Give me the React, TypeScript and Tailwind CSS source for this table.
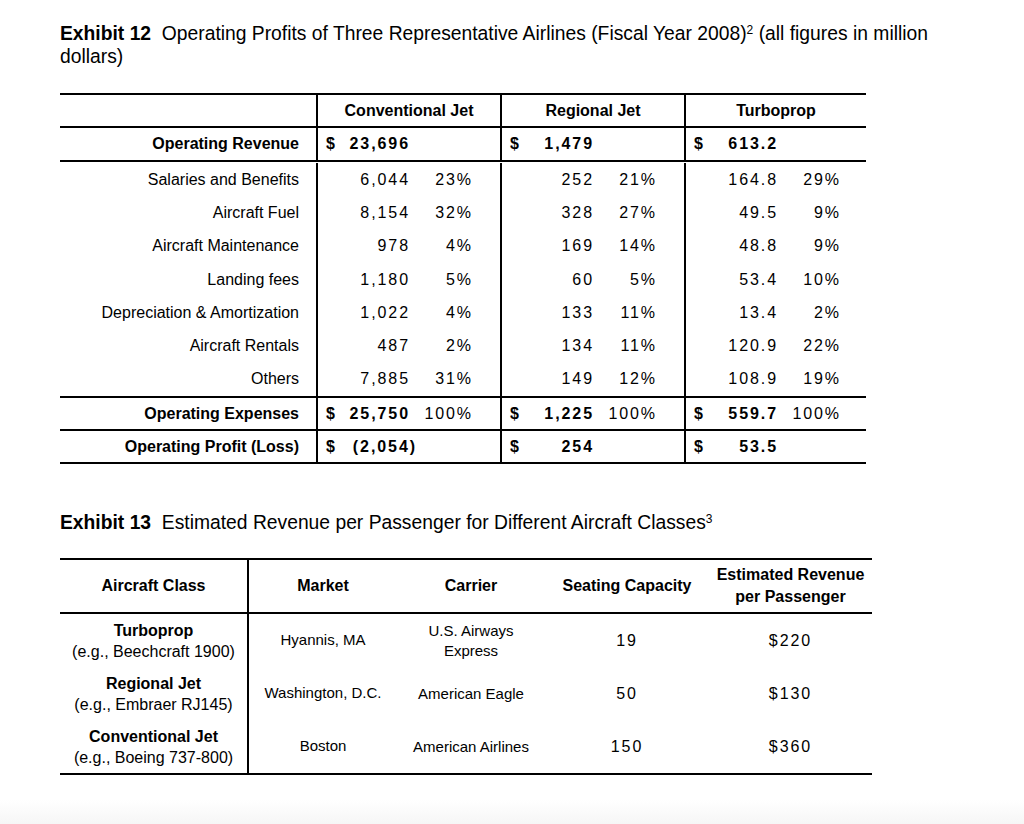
import React from 'react'

type Pair = [string, string]

interface ICostRow {
    label: string
    values: Pair[]
}

const costRows: ICostRow[] = [
    { label: 'Salaries and Benefits', values: [['6,044', '23%'], ['252', '21%'], ['164.8', '29%']] },
    { label: 'Aircraft Fuel', values: [['8,154', '32%'], ['328', '27%'], ['49.5', '9%']] },
    { label: 'Aircraft Maintenance', values: [['978', '4%'], ['169', '14%'], ['48.8', '9%']] },
    { label: 'Landing fees', values: [['1,180', '5%'], ['60', '5%'], ['53.4', '10%']] },
    { label: 'Depreciation & Amortization', values: [['1,022', '4%'], ['133', '11%'], ['13.4', '2%']] },
    { label: 'Aircraft Rentals', values: [['487', '2%'], ['134', '11%'], ['120.9', '22%']] },
    { label: 'Others', values: [['7,885', '31%'], ['149', '12%'], ['108.9', '19%']] },
]

const colWidths = ['w-[184px]', 'w-[184px]', 'w-[182px]']

const Money: React.FC<{ dollar?: boolean; value: string; pct?: string; bold?: boolean; neg?: boolean }> = ({
    dollar,
    value,
    pct,
    bold,
    neg,
}) => {
    return (
        <div className="grid h-full grid-cols-[20px_64px_63px] items-center pl-[8px] tracking-[0.12em]">
            <span className="font-bold tracking-normal">{dollar ? '$' : ''}</span>
            <span className={`text-right ${bold ? 'font-bold' : ''} ${neg ? 'mr-[-7px]' : ''}`}>{value}</span>
            <span className="text-right">{pct}</span>
        </div>
    )
}

const SummaryRow: React.FC<{ label: string; values: string[]; pcts?: string[]; h: string }> = ({
    label,
    values,
    pcts,
    h,
}) => {
    return (
        <div className={`flex border-b-2 border-black ${h}`}>
            <div className="flex w-[256px] items-center justify-end pr-[17px] font-bold">{label}</div>
            {values.map((v, i) => (
                <div key={i} className={`${colWidths[i]} border-l-2 border-black`}>
                    <Money dollar bold value={v} pct={pcts ? pcts[i] : ''} neg={v.startsWith('(')} />
                </div>
            ))}
        </div>
    )
}

interface IAircraft {
    name: string
    example: string
    market: string
    carrier: React.ReactNode
    seats: string
    revenue: string
}

const aircraft: IAircraft[] = [
    {
        name: 'Turboprop',
        example: '(e.g., Beechcraft 1900)',
        market: 'Hyannis, MA',
        carrier: (
            <>
                U.S. Airways
                <br />
                Express
            </>
        ),
        seats: '19',
        revenue: '$220',
    },
    {
        name: 'Regional Jet',
        example: '(e.g., Embraer RJ145)',
        market: 'Washington, D.C.',
        carrier: 'American Eagle',
        seats: '50',
        revenue: '$130',
    },
    {
        name: 'Conventional Jet',
        example: '(e.g., Boeing 737-800)',
        market: 'Boston',
        carrier: 'American Airlines',
        seats: '150',
        revenue: '$360',
    },
]

const App: React.FC = () => {
    return (
        <div className="flex min-h-[824px] flex-col bg-white font-['Liberation_Sans',Arial,sans-serif] text-[16px] text-black">
            <div className="pl-[60px] pt-[22px]">
                <h1 className="text-[19.3px] leading-[23px]">
                    <span className="font-bold">Exhibit 12</span>
                    &nbsp; Operating Profits of Three Representative Airlines (Fiscal Year 2008)
                    <sup className="text-[12px]">2</sup> (all figures in million
                    <br />
                    dollars)
                </h1>

                {/* Exhibit 12 table */}
                <div className="mt-[25px] w-[806px] border-t-2 border-black">
                    <div className="flex h-[33px] border-b-2 border-black font-bold">
                        <div className="w-[256px]"></div>
                        <div className="flex w-[184px] items-center justify-center border-l-2 border-black">
                            Conventional Jet
                        </div>
                        <div className="flex w-[184px] items-center justify-center border-l-2 border-black">
                            Regional Jet
                        </div>
                        <div className="flex w-[182px] items-center justify-center border-l-2 border-black">
                            Turboprop
                        </div>
                    </div>
                    <SummaryRow h="h-[34px]" label="Operating Revenue" values={['23,696', '1,479', '613.2']} />
                    <div className="flex flex-col border-b-2 border-black pt-[1px]">
                        {costRows.map((row) => (
                            <div key={row.label} className="flex h-[33.3px]">
                                <div className="flex w-[256px] items-center justify-end pr-[17px]">{row.label}</div>
                                {row.values.map((pair, i) => (
                                    <div key={i} className={`${colWidths[i]} border-l-2 border-black`}>
                                        <Money value={pair[0]} pct={pair[1]} />
                                    </div>
                                ))}
                            </div>
                        ))}
                    </div>
                    <SummaryRow
                        h="h-[33px]"
                        label="Operating Expenses"
                        values={['25,750', '1,225', '559.7']}
                        pcts={['100%', '100%', '100%']}
                    />
                    <SummaryRow h="h-[33px]" label="Operating Profit (Loss)" values={['(2,054)', '254', '53.5']} />
                </div>

                <h2 className="mt-[47px] text-[19.3px] leading-[23px]">
                    <span className="font-bold">Exhibit 13</span>
                    &nbsp; Estimated Revenue per Passenger for Different Aircraft Classes
                    <sup className="text-[12px]">3</sup>
                </h2>

                {/* Exhibit 13 table */}
                <div className="mt-[24px] w-[812px] border-y-2 border-black">
                    <div className="flex h-[54px] border-b-2 border-black text-center font-bold">
                        <div className="flex w-[187px] items-center justify-center">Aircraft Class</div>
                        <div className="flex w-[150px] items-center justify-center border-l-2 border-black">
                            Market
                        </div>
                        <div className="flex w-[148px] items-center justify-center">Carrier</div>
                        <div className="flex w-[164px] items-center justify-center">Seating Capacity</div>
                        <div className="flex w-[163px] items-center justify-center leading-[22px]">
                            Estimated Revenue
                            <br />
                            per Passenger
                        </div>
                    </div>
                    {aircraft.map((a) => (
                        <div key={a.name} className="flex h-[53px] text-center">
                            <div className="flex w-[187px] flex-col items-center justify-center leading-[21px]">
                                <span className="font-bold">{a.name}</span>
                                <span>{a.example}</span>
                            </div>
                            <div className="flex w-[150px] items-center justify-center border-l-2 border-black text-[15px]">
                                {a.market}
                            </div>
                            <div className="flex w-[148px] items-center justify-center text-[15px] leading-[20px]">
                                <span>{a.carrier}</span>
                            </div>
                            <div className="flex w-[164px] items-center justify-center tracking-[0.12em]">
                                {a.seats}
                            </div>
                            <div className="flex w-[163px] items-center justify-center tracking-[0.12em]">
                                {a.revenue}
                            </div>
                        </div>
                    ))}
                </div>
            </div>
            <div className="mt-auto h-[24px] bg-gradient-to-b from-white to-[#f6f6f6]"></div>
        </div>
    )
}

export default App
